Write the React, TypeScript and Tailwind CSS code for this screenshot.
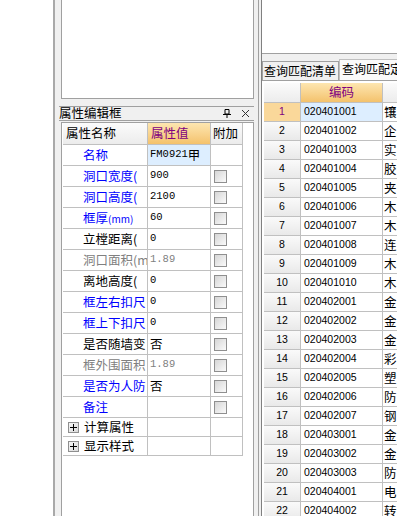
import React from 'react'

const cjk = "font-['Noto_Sans_CJK_SC',sans-serif]"
const mono = "font-['Liberation_Mono',monospace]"
const sans = "font-['Liberation_Sans',sans-serif]"

type Prop = {
  name: React.ReactNode
  tone: 'blue' | 'black' | 'gray'
  value: string
  selected?: boolean
  check?: boolean
}

const props: Prop[] = [
  { name: '名称', tone: 'blue', value: 'FM0921甲', selected: true, check: false },
  { name: '洞口宽度(', tone: 'blue', value: '900', check: true },
  { name: '洞口高度(', tone: 'blue', value: '2100', check: true },
  {
    name: (
      <>
        框厚<span className="text-[10px]">(mm)</span>
      </>
    ),
    tone: 'blue',
    value: '60',
    check: true,
  },
  { name: '立樘距离(', tone: 'black', value: '0', check: true },
  { name: '洞口面积(m', tone: 'gray', value: '1.89', check: true },
  { name: '离地高度(', tone: 'black', value: '0', check: true },
  { name: '框左右扣尺', tone: 'blue', value: '0', check: true },
  { name: '框上下扣尺', tone: 'blue', value: '0', check: true },
  { name: '是否随墙变', tone: 'black', value: '否', check: true },
  { name: '框外围面积', tone: 'gray', value: '1.89', check: true },
  { name: '是否为人防', tone: 'blue', value: '否', check: true },
  { name: '备注', tone: 'blue', value: '', check: true },
]

const rows = [
  ['020401001', '镶'],
  ['020401002', '企'],
  ['020401003', '实'],
  ['020401004', '胶'],
  ['020401005', '夹'],
  ['020401006', '木'],
  ['020401007', '木'],
  ['020401008', '连'],
  ['020401009', '木'],
  ['020401010', '木'],
  ['020402001', '金'],
  ['020402002', '金'],
  ['020402003', '金'],
  ['020402004', '彩'],
  ['020402005', '塑'],
  ['020402006', '防'],
  ['020402007', '钢'],
  ['020403001', '金'],
  ['020403002', '金'],
  ['020403003', '防'],
  ['020404001', '电'],
  ['020404002', '转'],
]

function CheckBox() {
  return (
    <div className="w-[13px] h-[13px] border border-[#8f8f8f] bg-linear-to-br from-[#d6d6d6] to-[#fafafa]" />
  )
}

function ExpandBox() {
  return (
    <div className="w-[11px] h-[11px] border border-[#8f8f8f] bg-linear-to-br from-[#f4f4f4] to-[#dcdcdc] flex items-center justify-center">
      <svg width="7" height="7" viewBox="0 0 7 7">
        <path d="M0 3.5h7M3.5 0v7" stroke="#000" strokeWidth="1" />
      </svg>
    </div>
  )
}

function PropertyGrid() {
  const toneClass = (t: Prop['tone']) =>
    t === 'blue' ? 'text-[#0000ff]' : t === 'gray' ? 'text-[#808080]' : 'text-black'

  return (
    <div className="w-[180px]">
      {/* 헤더 */}
      <div className={`flex h-[22px] text-[12.5px] ${cjk}`}>
        <div className="w-[85px] border-r border-b border-[#c0c0c0] bg-linear-to-b from-[#fbfbfb] to-[#ececec] flex items-center pl-[3px]">
          属性名称
        </div>
        <div className="w-[63px] border-r border-b border-[#c0c0c0] bg-linear-to-b from-[#fde6b0] to-[#f4c26c] flex items-center pl-[3px] text-[#800080]">
          属性值
        </div>
        <div className="w-[32px] border-r border-b border-[#c0c0c0] bg-linear-to-b from-[#fbfbfb] to-[#ececec] flex items-center pl-[2px]">
          附加
        </div>
      </div>

      {props.map((p, i) => {
        const isCjkValue = /[\u4e00-\u9fff]/.test(p.value) && !/\d/.test(p.value)
        return (
          <div key={i} className="flex h-[21px]">
            <div
              className={`w-[85px] border-r border-b border-[#c0c0c0] flex items-center pl-[20px] whitespace-nowrap overflow-hidden text-[12.5px] ${cjk} ${toneClass(p.tone)}`}
            >
              {p.name}
            </div>
            <div
              className={`w-[63px] border-r border-b border-[#c0c0c0] flex items-center pl-[2px] whitespace-nowrap overflow-hidden ${
                p.selected ? 'bg-[#ddeeff]' : ''
              } ${p.tone === 'gray' ? 'text-[#808080]' : 'text-black'} ${
                isCjkValue ? `text-[12.5px] ${cjk}` : `text-[10.5px] ${mono}`
              }`}
            >
              {p.selected ? (
                <>
                  FM0921<span className={`text-[12.5px] ${cjk}`}>甲</span>
                </>
              ) : (
                p.value
              )}
            </div>
            <div className="w-[32px] border-r border-b border-[#c0c0c0] flex items-center pl-[3px]">
              {p.check && <CheckBox />}
            </div>
          </div>
        )
      })}

      {['计算属性', '显示样式'].map((g) => (
        <div key={g} className="flex h-[19px]">
          <div
            className={`w-[85px] border-r border-b border-[#c0c0c0] flex items-center pl-[5px] gap-[5px] text-[12.5px] ${cjk}`}
          >
            <ExpandBox />
            {g}
          </div>
          <div className="w-[63px] border-r border-b border-[#c0c0c0]" />
          <div className="w-[32px] border-r border-b border-[#c0c0c0]" />
        </div>
      ))}
    </div>
  )
}

function ResultGrid() {
  return (
    <div className="pl-[2px] pt-[2px]">
      <div className={`flex h-[20px] ${cjk} text-[12.5px]`}>
        <div className="w-[37px] shrink-0 border-r border-b border-[#c0c0c0] bg-linear-to-b from-[#fbfbfb] to-[#ececec]" />
        <div className="w-[82px] shrink-0 border-r border-b border-[#c0c0c0] bg-linear-to-b from-[#fde6b0] to-[#f4c26c] flex items-center justify-center text-[#800080]">
          编码
        </div>
        <div className="w-[60px] shrink-0 border-b border-[#c0c0c0] bg-linear-to-b from-[#fbfbfb] to-[#ececec]" />
      </div>
      {rows.map(([code, ch], i) => {
        const first = i === 0
        return (
          <div key={code} className="flex h-[19px]">
            <div
              className={`w-[37px] shrink-0 border-r border-b border-[#c0c0c0] flex items-center justify-center text-[10.5px] ${sans} ${
                first
                  ? 'bg-[#fad89a] text-[#800080]'
                  : 'bg-linear-to-b from-[#fafafa] to-[#e9e9e9] text-black'
              }`}
            >
              {i + 1}
            </div>
            <div
              className={`w-[82px] shrink-0 border-r border-b border-[#c0c0c0] flex items-center pl-[3px] text-[10.5px] ${sans} ${
                first ? 'bg-[#ddeeff]' : ''
              }`}
            >
              {code}
            </div>
            <div
              className={`w-[60px] shrink-0 border-b border-[#c0c0c0] flex items-center pl-[1px] text-[12.5px] ${cjk}`}
            >
              {ch}
            </div>
          </div>
        )
      })}
    </div>
  )
}

export default function App() {
  return (
    <div className="w-[397px] h-[516px] flex bg-white overflow-hidden text-black">
      {/* 왼쪽 빈 영역 */}
      <div className="w-[53px] shrink-0 bg-white" />

      {/* 속성 편집 패널 */}
      <div className="w-[205px] shrink-0 border-l-2 border-[#a9a9a9] bg-[#f0f0f0] flex flex-col pl-[6px] pr-[4px]">
        <div className="h-[99px] shrink-0 bg-white border-l border-r border-b border-[#a0a0a0]" />

        <div className="mt-[7px] -ml-[2px] h-[15px] shrink-0 border-t border-b border-[#a0a0a0] flex items-center">
          <span className={`text-[12.5px] leading-none ${cjk}`}>属性编辑框</span>
          <div className="ml-auto flex items-center gap-[10px] pr-[4px]">
            <svg width="8" height="9" viewBox="0 0 8 9">
              <path d="M2 0.5h4v4.5H2z" fill="none" stroke="#000" />
              <path d="M0 5.5h8M4 5.5V9" stroke="#000" />
            </svg>
            <svg width="9" height="9" viewBox="0 0 9 9">
              <path d="M1 1l7 7M8 1L1 8" stroke="#333" strokeWidth="1" />
            </svg>
          </div>
        </div>

        <div className="mt-[1px] flex-1 bg-white border-l border-r border-t border-[#a0a0a0] pl-[1px]">
          <PropertyGrid />
        </div>
      </div>

      {/* 분할선 */}
      <div className="w-[3px] shrink-0 bg-[#f0f0f0] border-l border-[#a0a0a0]" />

      {/* 조회 결과 패널 */}
      <div className="flex-1 bg-[#f0f0f0] flex flex-col border-l border-[#808080]">
        <div className="h-[54px] shrink-0 bg-white border-b border-[#a0a0a0]" />

        <div className={`mt-[5px] h-[21px] shrink-0 flex items-end text-[12px] ${cjk}`}>
          <div className="h-[19px] w-[77px] shrink-0 border border-[#a0a0a0] border-b-0 bg-[#f0f0f0] flex items-center pl-[1px] whitespace-nowrap overflow-hidden">
            查询匹配清单
          </div>
          <div className="h-[21px] flex-1 border-t border-l border-[#c0c0c0] bg-[#fafafa] flex items-start pl-[2px] whitespace-nowrap overflow-hidden">
            查询匹配定额
          </div>
        </div>

        <div className="flex-1 bg-white border-t border-[#a0a0a0] overflow-hidden">
          <ResultGrid />
        </div>
      </div>
    </div>
  )
}
